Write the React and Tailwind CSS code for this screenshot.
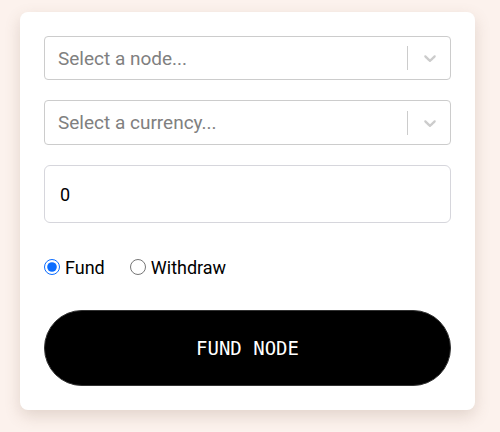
import { useState } from 'react';

function Chevron() {
  return (
    <svg width="20" height="20" viewBox="0 0 20 20" fill="#cccccc" aria-hidden="true">
      <path d="M4.516 7.548c0.436-0.446 1.043-0.481 1.576 0l3.908 3.747 3.908-3.747c0.533-0.481 1.141-0.446 1.574 0 0.436 0.445 0.408 1.197 0 1.615-0.406 0.418-4.695 4.502-4.695 4.502-0.217 0.223-0.502 0.335-0.787 0.335s-0.57-0.112-0.789-0.335c0 0-4.287-4.084-4.695-4.502s-0.436-1.17 0-1.615z" />
    </svg>
  );
}

function FakeSelect({ placeholder, height }) {
  return (
    <div className={`flex items-center border border-[#cccccc] rounded-[4px] bg-white ${height}`}>
      <div className="flex-1 pl-[13px] text-[19px] text-[#808080] leading-none">{placeholder}</div>
      <span className="w-px h-[24px] bg-[#cccccc]" />
      <div className="pl-[12px] pr-[10px] flex items-center">
        <Chevron />
      </div>
    </div>
  );
}

export default function App() {
  const [modo, setModo] = useState('fund');
  const [monto, setMonto] = useState('0');

  return (
    <div className="min-h-screen w-full bg-[#fcf2ed] pt-[12px] pl-[20px] font-['Roboto',sans-serif]">
      <div className="w-[455px] bg-white rounded-[8px] shadow-[0_6px_16px_rgba(120,90,70,0.2)] p-6 flex flex-col">
        <FakeSelect placeholder="Select a node..." height="h-[44px]" />
        <div className="mt-[20px]">
          <FakeSelect placeholder="Select a currency..." height="h-[45px]" />
        </div>

        <input
          value={monto}
          onChange={e => setMonto(e.target.value)}
          className="mt-[20px] h-[58px] w-full border border-[#d6d6dc] rounded-[6px] px-[15px] text-[18px] text-black outline-none"
        />

        <div className="mt-[35px] flex items-center text-[18px] text-black h-[18px]">
          <label className="flex items-center">
            <input
              type="radio"
              name="modo"
              checked={modo === 'fund'}
              onChange={() => setModo('fund')}
              className="m-0 w-[16px] h-[16px] accent-[#0a6cff]"
            />
            <span className="ml-[5px]">Fund</span>
          </label>
          <label className="flex items-center ml-[25px]">
            <input
              type="radio"
              name="modo"
              checked={modo === 'withdraw'}
              onChange={() => setModo('withdraw')}
              className="m-0 w-[16px] h-[16px]"
            />
            <span className="ml-[5px]">Withdraw</span>
          </label>
        </div>

        <button className="mt-[34px] h-[76px] w-full rounded-full bg-black border border-[#333] text-white text-[19px] font-['DejaVu_Sans_Mono',monospace]">
          {modo === 'fund' ? 'FUND NODE' : 'WITHDRAW'}
        </button>
      </div>
    </div>
  );
}
